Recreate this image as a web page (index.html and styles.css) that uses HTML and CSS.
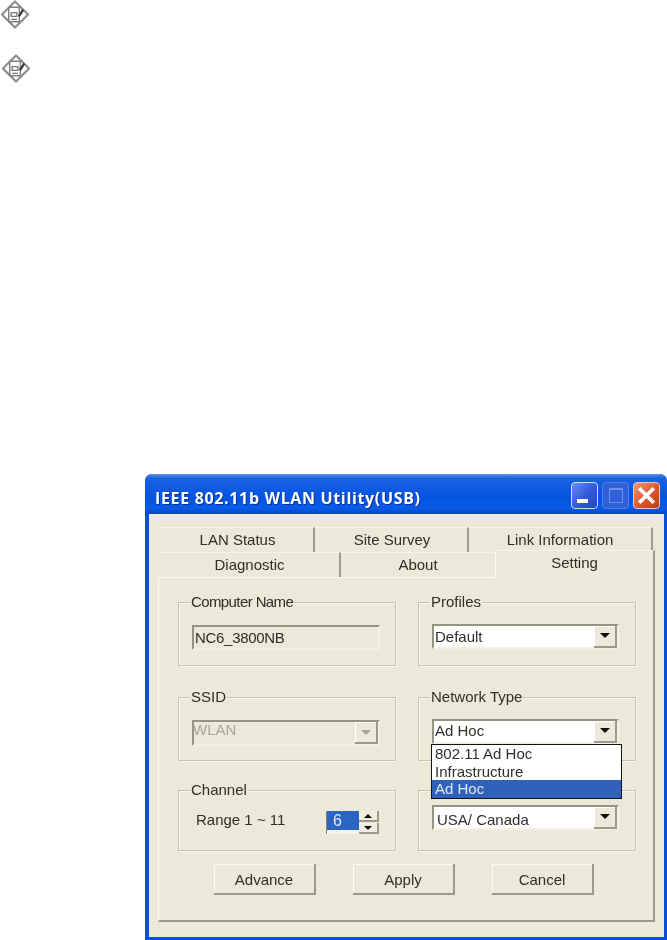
FILE: index.html
```html
<!DOCTYPE html>
<html lang="en">
<head>
<meta charset="utf-8">
<title>IEEE 802.11b WLAN Utility(USB)</title>
<link rel="stylesheet" href="styles.css">
</head>
<body>
<div class="notes">
  <svg class="note-icon" viewBox="0 0 30 30"><path class="d1" d="M15 1.500 28.500 15 15 28.500 1.500 15Z"/><path class="doc" d="M8.500 7.500h11v15h-11z"/><path class="lines" d="M11 13h6v4h-6zM11 20h6"/><path class="pen" d="M23.500 10 19 17"/></svg>
  <svg class="note-icon" viewBox="0 0 30 30"><path class="d1" d="M15 1.500 28.500 15 15 28.500 1.500 15Z"/><path class="doc" d="M8.500 7.500h11v15h-11z"/><path class="lines" d="M11 13h6v4h-6zM11 20h6"/><path class="pen" d="M23.500 10 19 17"/></svg>
</div>
<div class="window">
  <div class="titlebar">
    <span class="title">IEEE 802.11b WLAN Utility(USB)</span>
    <div class="caption">
      <span class="cap cap-min"><i></i></span>
      <span class="cap cap-max"><i></i></span>
      <span class="cap cap-close"><svg viewBox="0 0 17 17"><path d="M2 2 15 15M15 2 2 15"/></svg></span>
    </div>
  </div>
  <div class="client">
    <div class="tab-row tab-row-back">
      <span class="tab w-lan">LAN Status</span>
      <span class="tab w-site">Site Survey</span>
      <span class="tab w-link">Link Information</span>
    </div>
    <div class="tab-row">
      <span class="tab w-diag">Diagnostic</span>
      <span class="tab w-about">About</span>
      <span class="tab tab-active">Setting</span>
    </div>
    <div class="panel">
      <div class="row row-1">
        <section class="group">
          <span class="legend legend-tight">Computer Name</span>
          <div class="field field-readonly">NC6_3800NB</div>
        </section>
        <section class="group">
          <span class="legend">Profiles</span>
          <div class="field combo"><span class="value">Default</span><span class="drop"><b></b></span></div>
        </section>
      </div>
      <div class="row row-2">
        <section class="group">
          <span class="legend">SSID</span>
          <div class="field combo combo-disabled"><span class="value">WLAN</span><span class="drop"><b></b></span></div>
        </section>
        <section class="group">
          <span class="legend">Network Type</span>
          <div class="field combo"><span class="value value-up">Ad Hoc</span><span class="drop"><b></b></span></div>
          <ul class="menu">
            <li>802.11 Ad Hoc</li>
            <li>Infrastructure</li>
            <li class="selected">Ad Hoc</li>
          </ul>
        </section>
      </div>
      <div class="row row-3">
        <section class="group channel">
          <span class="legend">Channel</span>
          <span class="range">Range 1 ~ 11</span>
          <div class="spin">
            <span class="spin-value"><em>6</em></span>
            <span class="spin-btns"><span class="up"><b></b></span><span class="down"><b></b></span></span>
          </div>
        </section>
        <section class="group group-country">
          <div class="field combo"><span class="value value-country">USA/ Canada</span><span class="drop"><b></b></span></div>
        </section>
      </div>
      <div class="actions">
        <button class="btn">Advance</button>
        <button class="btn">Apply</button>
        <button class="btn">Cancel</button>
      </div>
    </div>
  </div>
</div>
</body>
</html>
```
FILE: styles.css
```css
* { box-sizing: border-box; }
html, body { margin: 0; padding: 0; }
body {
  width: 667px;
  height: 940px;
  overflow: hidden;
  background: #fff;
  font-family: "Liberation Sans", Arial, sans-serif;
  font-size: 15px;
  color: #2f2f2a;
}

/* page margin icons */
.notes {
  display: flex;
  flex-direction: column;
  gap: 25px;
  height: 474px;
}
.note-icon { width: 30px; height: 29px; display: block; filter: blur(.7px); }
.note-icon + .note-icon { margin-left: 1px; }
.note-icon path { fill: none; stroke-linejoin: round; }
.d1 { stroke: #8c8c8c; stroke-width: 2.2; }
.doc { stroke: #808080; stroke-width: 1.5; }
.lines { stroke: #777; stroke-width: 1.4; }
.pen { stroke: #333; stroke-width: 2.2; }

/* window */
.window {
  width: 522px;
  height: 466px;
  margin-left: 145px;
  padding: 0 3px 3px 4px;
  background: #0c4fd6;
  border-radius: 7px 7px 0 0;
  display: flex;
  flex-direction: column;
  filter: blur(.6px);
}
.titlebar {
  height: 40px;
  flex: none;
  display: flex;
  align-items: center;
  justify-content: space-between;
  margin: 0 -3px 0 -4px;
  padding: 0 7px 0 10px;
  border-radius: 7px 7px 0 0;
  background: linear-gradient(#5d93ea 0, #1a62e0 10%, #0553e3 60%, #0a5be8 85%, #0446c4 100%);
}
.title {
  font-family: "Open Sans", sans-serif;
  font-weight: 700;
  font-size: 16px;
  letter-spacing: .66px;
  line-height: 20px;
  margin-top: 8px;
  color: #fff;
  text-shadow: 1px 1px 0 #0f2f90;
}
.caption { display: flex; gap: 4px; margin-top: 3px; }
.cap {
  width: 27px;
  height: 27px;
  border-radius: 4px;
  border: 1px solid #cfdcf8;
  display: flex;
  align-items: center;
  justify-content: center;
}
.cap-min { background: linear-gradient(135deg, #6a90ee, #3058d8 55%, #1f46c0); align-items: flex-end; justify-content: flex-start; }
.cap-min i { width: 11px; height: 4px; background: #fff; margin: 0 0 5px 5px; }
.cap-max { background: #2f60d8; border-color: #4f80ea; }
.cap-max i { width: 14px; height: 15px; border: 1px solid #6a94ec; border-top-width: 2px; }
.cap-close { background: linear-gradient(135deg, #ee9a78, #dc5430 55%, #c03a18); border-color: #e8c8c0; }
.cap-close svg { width: 19px; height: 19px; }
.cap-close path { fill: none; stroke: #fff; stroke-width: 3.4; }

.client {
  flex: 1;
  min-height: 0;
  background: #ece9d8;
  padding: 13px 0 0 9px;
}

/* tabs */
.tab-row { display: flex; height: 25px; padding-left: 2px; align-items: flex-start; }
.tab {
  height: 25px;
  display: flex;
  align-items: center;
  justify-content: center;
  background: #ece9d8;
  border-top: 1px solid #f6f4ea;
  border-right: 2px solid #9c9a8a;
  padding-bottom: 1px;
}
.w-lan { width: 155px; padding-left: 2px; }
.w-site { width: 154px; padding-left: 2px; }
.w-link { width: 184px; }
.w-diag { width: 181px; }
.w-about { width: 154px; border-right: 0; }
.tab-active {
  width: 160px;
  height: 28px;
  margin-top: -2px;
  margin-bottom: -1px;
  position: relative;
  z-index: 1;
  align-items: flex-start;
  padding-top: 3px;
  border-left: 1px solid #faf9f2;
}

.panel {
  width: 497px;
  height: 345px;
  background: #ece9d8;
  border: 1px solid #faf9f2;
  border-right: 2px solid #9c9a8a;
  border-bottom: 2px solid #9c9a8a;
  padding: 24px 0 0 19px;
}
.row { display: flex; gap: 22px; }
.row-1 { height: 64px; margin-bottom: 31px; }
.row-2 { height: 64px; margin-bottom: 29px; }
.row-3 { height: 61px; margin-bottom: 13px; }

.group {
  width: 218px;
  position: relative;
  border: 1px solid #c4c1af;
  box-shadow: 1px 1px 0 #f8f7ef, inset 1px 1px 0 #f8f7ef;
  padding: 22px 0 0 13px;
}
.legend {
  position: absolute;
  top: -10px;
  left: 11px;
  padding: 0 1px;
  background: #ece9d8;
  line-height: 17px;
}
.legend-tight { letter-spacing: -.6px; }

/* inputs */
.field {
  width: 188px;
  height: 25px;
  border: 2px solid;
  border-color: #959382 #f3f1e6 #f3f1e6 #959382;
  background: #ece9d8;
  display: flex;
  align-items: center;
  padding-left: 1px;
  line-height: 17px;
}
.field-readonly { letter-spacing: -.3px; }
.combo { background: #fff; justify-content: space-between; }
.combo .drop {
  width: 23px;
  height: 22px;
  background: #ece9d8;
  border-right: 2px solid #9c9a8a;
  border-bottom: 2px solid #9c9a8a;
  box-shadow: inset 1px 1px 0 #fff;
  display: flex;
  align-items: center;
  justify-content: center;
}
.drop b {
  border: 5px solid transparent;
  border-top: 5px solid #111;
  border-bottom: 0;
}
.combo-disabled { background: #ece9d8; color: #a9a695; height: 26px; }
.combo-disabled .value { margin: -7px 0 0 -2px; }
.combo-disabled .drop b { border-top-color: #a9a695; }
.group:nth-child(2) .field { width: 187px; margin-top: -1px; }
.value-up { margin-top: -2px; }
.value-country { margin: 3px 0 0 2px; }

/* dropdown list */
.menu {
  position: absolute;
  left: 12px;
  top: 46px;
  z-index: 5;
  width: 191px;
  height: 55px;
  margin: 0;
  padding: 0;
  list-style: none;
  background: #fff;
  border: 1px solid #111;
}
.menu li { height: 17.5px; line-height: 17px; padding-left: 3px; }
.menu .selected { background: #2f62b8; color: #dfe8f8; }

/* channel */
.channel { padding: 19px 0 0 17px; display: flex; align-items: flex-start; }
.range { width: 130px; line-height: 18px; margin-top: 1px; }
.spin { display: flex; width: 53px; height: 23px; margin-top: 1px; }
.spin-value { width: 33px; height: 23px; background: #f6f5ec; border-left: 1px solid #85836f; }
.spin-value em {
  display: block;
  height: 19px;
  background: #2c64c4;
  color: #e6edfa;
  font-style: normal;
  font-size: 16px;
  padding-left: 6px;
  line-height: 19px;
}
.spin-btns { width: 20px; display: flex; flex-direction: column; gap: 1px; }
.spin-btns span {
  flex: 1;
  background: #f0eee0;
  border-right: 2px solid #9c9a8a;
  border-bottom: 2px solid #9c9a8a;
  display: flex;
  align-items: center;
  justify-content: center;
}
.up b { border: 4px solid transparent; border-bottom: 4px solid #111; border-top: 0; }
.down b { border: 4px solid transparent; border-top: 4px solid #111; border-bottom: 0; }
.group-country { padding-top: 15px; }

/* buttons */
.actions { display: flex; gap: 36px; padding-left: 36px; }
.btn {
  width: 102px;
  height: 31px;
  padding: 1px 0 0;
  font: inherit;
  color: inherit;
  background: #ece9d8;
  border: 0;
  border-right: 2px solid #9c9a8a;
  border-bottom: 2px solid #9c9a8a;
  box-shadow: inset 1px 1px 0 #fbfaf3;
}
.btn + .btn { margin-left: 1px; }
```
